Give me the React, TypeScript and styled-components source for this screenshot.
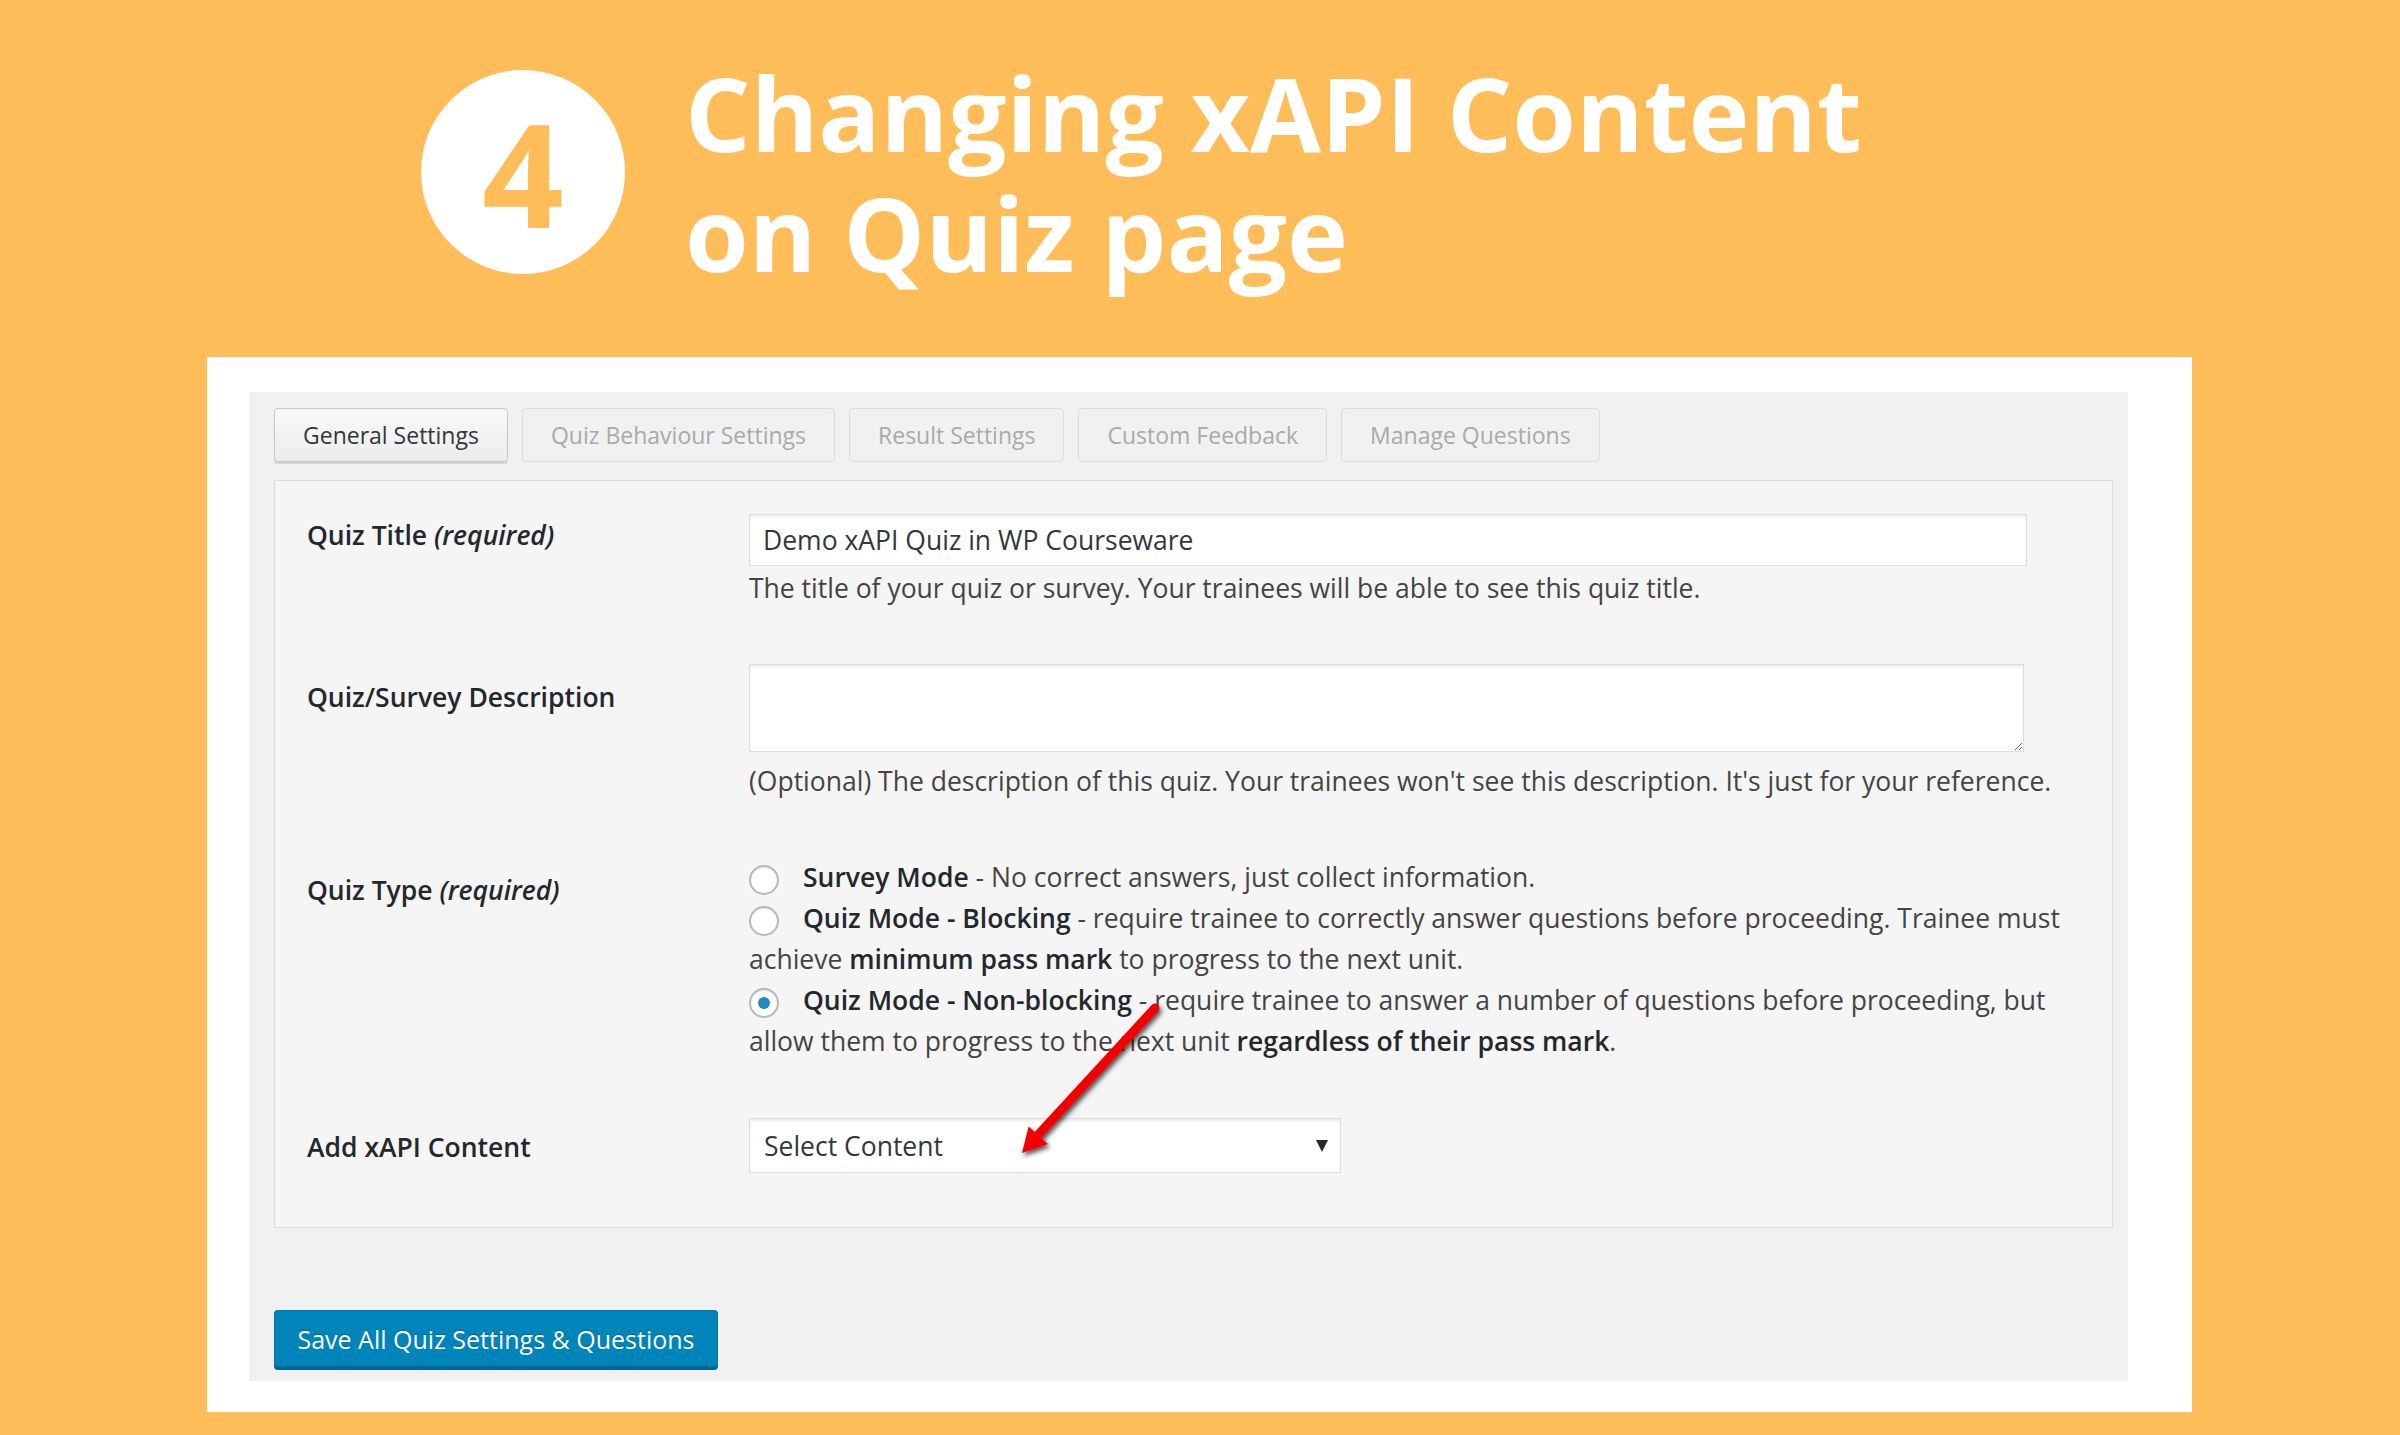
import React from 'react';
import styled, { createGlobalStyle } from 'styled-components';

const GlobalStyle = createGlobalStyle`
  html, body {
    margin: 0;
    padding: 0;
  }
  body {
    background: #ffbd59;
    font-family: "Open Sans", "Noto Sans", sans-serif;
  }
`;

const Page = styled.div`
  position: relative;
  width: 2400px;
  height: 1435px;
  overflow: hidden;
  background: #ffbd59;
`;

const Header = styled.header`
  display: flex;
  align-items: center;
  gap: 60px;
  padding: 52px 0 0 421px;
`;

const StepBadge = styled.div`
  width: 204px;
  height: 204px;
  border-radius: 50%;
  background: #ffffff;
  display: flex;
  align-items: center;
  justify-content: center;
  color: #ffbd59;
  font-size: 143px;
  font-weight: 700;
  line-height: 1;
`;

const Title = styled.h1`
  margin: 0;
  color: #ffffff;
  font-size: 103px;
  font-weight: 700;
  line-height: 120px;
`;

const Card = styled.div`
  box-sizing: border-box;
  width: 1985px;
  height: 1055px;
  margin: 65px 0 0 207px;
  padding: 35px 64px 31px 42px;
  background: #ffffff;
`;

const Panel = styled.div`
  box-sizing: border-box;
  height: 100%;
  padding: 16px 15px 14px 25px;
  background: #f1f1f1;
`;

const Tabs = styled.nav`
  display: flex;
  gap: 14px;
  height: 54px;
`;

const Tab = styled.div<{ $active?: boolean }>`
  box-sizing: border-box;
  display: flex;
  align-items: center;
  padding: 0 28px;
  border: 1.5px solid ${p => (p.$active ? '#c8c8c8' : '#dddddd')};
  border-radius: 4px;
  background: ${p => (p.$active ? 'linear-gradient(#f9f9f9, #ececec)' : '#f1f1f1')};
  box-shadow: ${p => (p.$active ? '0 2px 1px rgba(0,0,0,0.12)' : 'none')};
  color: ${p => (p.$active ? '#32373c' : '#a7aaad')};
  font-size: 23px;
  white-space: nowrap;
`;

const ContentBox = styled.section`
  box-sizing: border-box;
  height: 748px;
  margin-top: 18px;
  padding: 33px 34px 0 32px;
  border: 1.5px solid #dcdcdc;
  background: #f5f5f5;
  display: flex;
  flex-direction: column;
  gap: 56px;
`;

const FormRow = styled.div`
  display: grid;
  grid-template-columns: 442px 1fr;
`;

const Label = styled.div<{ $offset: number }>`
  padding-top: ${p => p.$offset}px;
  color: #23282d;
  font-size: 26.5px;
  font-weight: 600;
  line-height: 36px;

  em {
    font-weight: 600;
  }
`;

const Field = styled.div`
  display: flex;
  flex-direction: column;
  color: #444444;
  font-size: 26.5px;
`;

const TextInput = styled.div`
  box-sizing: border-box;
  width: 1278px;
  height: 52px;
  padding: 0 13px;
  display: flex;
  align-items: center;
  border: 1.5px solid #dddddd;
  box-shadow: inset 0 2px 3px rgba(0, 0, 0, 0.08);
  background: #ffffff;
  color: #32373c;
  font-size: 26.5px;
`;

const TextArea = styled.textarea`
  box-sizing: border-box;
  display: block;
  width: 1275px;
  height: 88px;
  margin: 0;
  padding: 8px 13px;
  border: 1.5px solid #dddddd;
  border-radius: 0;
  box-shadow: inset 0 2px 3px rgba(0, 0, 0, 0.08);
  background: #ffffff;
  font-family: inherit;
  font-size: 26.5px;
  outline: none;
`;

const Help = styled.p<{ $gap: number }>`
  margin: ${p => p.$gap}px 0 0;
  line-height: 40px;
`;

const Choices = styled.div`
  line-height: 41px;

  strong {
    color: #23282d;
    font-weight: 600;
  }
`;

const Radio = styled.span<{ $checked?: boolean }>`
  box-sizing: border-box;
  position: relative;
  display: inline-block;
  width: 30px;
  height: 30px;
  margin-right: 24px;
  vertical-align: middle;
  border: 2px solid #b4b9be;
  border-radius: 50%;
  background: #ffffff;
  box-shadow: inset 0 1px 2px rgba(0, 0, 0, 0.1);

  &::after {
    content: '';
    display: ${p => (p.$checked ? 'block' : 'none')};
    position: absolute;
    left: 50%;
    top: 50%;
    width: 12px;
    height: 12px;
    margin: -6px 0 0 -6px;
    border-radius: 50%;
    background: #1e8cbe;
  }
`;

const SelectBox = styled.div`
  box-sizing: border-box;
  width: 592px;
  height: 55px;
  padding: 0 12px 0 14px;
  display: flex;
  align-items: center;
  justify-content: space-between;
  border: 1.5px solid #dddddd;
  box-shadow: inset 0 2px 3px rgba(0, 0, 0, 0.08);
  background: #ffffff;
  color: #32373c;
  font-size: 26.5px;
`;

const Caret = styled.span`
  width: 0;
  height: 0;
  border-left: 6px solid transparent;
  border-right: 6px solid transparent;
  border-top: 12px solid #23282d;
`;

const SaveButton = styled.button`
  box-sizing: border-box;
  width: 444px;
  height: 57px;
  margin-top: 82px;
  padding: 0;
  border: 1.5px solid #0073aa;
  border-bottom-color: #006799;
  border-radius: 4px;
  background: #0085ba;
  box-shadow: 0 3px 0 #006799;
  color: #ffffff;
  font-family: inherit;
  font-size: 25px;
  text-shadow: 0 -1px 1px #006799;
`;

const Annotation = styled.svg`
  position: absolute;
  left: 1000px;
  top: 990px;
  overflow: visible;
`;

const tabs = [
  'General Settings',
  'Quiz Behaviour Settings',
  'Result Settings',
  'Custom Feedback',
  'Manage Questions',
];

const App: React.FC = () => {
  return (
    <Page>
      <GlobalStyle />
      <Header>
        <StepBadge>4</StepBadge>
        <Title>
          Changing xAPI Content
          <br />
          on Quiz page
        </Title>
      </Header>

      <Card>
        <Panel>
          <Tabs>
            {tabs.map((t, i) => (
              <Tab key={t} $active={i === 0}>
                {t}
              </Tab>
            ))}
          </Tabs>

          <ContentBox>
            <FormRow>
              <Label $offset={3}>
                Quiz Title <em>(required)</em>
              </Label>
              <Field>
                <TextInput>Demo xAPI Quiz in WP Courseware</TextInput>
                <Help $gap={2}>
                  The title of your quiz or survey. Your trainees will be able to see this quiz title.
                </Help>
              </Field>
            </FormRow>

            <FormRow>
              <Label $offset={15}>Quiz/Survey Description</Label>
              <Field>
                <TextArea defaultValue="" />
                <Help $gap={9}>
                  (Optional) The description of this quiz. Your trainees won't see this description. It's just for
                  your reference.
                </Help>
              </Field>
            </FormRow>

            <FormRow>
              <Label $offset={15}>
                Quiz Type <em>(required)</em>
              </Label>
              <Field>
                <Choices>
                  <Radio />
                  <strong>Survey Mode</strong> - No correct answers, just collect information.
                  <br />
                  <Radio />
                  <strong>Quiz Mode - Blocking</strong> - require trainee to correctly answer questions before
                  proceeding. Trainee must achieve <strong>minimum pass mark</strong> to progress to the next unit.
                  <br />
                  <Radio $checked />
                  <strong>Quiz Mode - Non-blocking</strong> - require trainee to answer a number of questions before
                  proceeding, but allow them to progress to the next unit <strong>regardless of their pass mark</strong>.
                </Choices>
              </Field>
            </FormRow>

            <FormRow>
              <Label $offset={11}>Add xAPI Content</Label>
              <Field>
                <SelectBox>
                  <span>Select Content</span>
                  <Caret />
                </SelectBox>
              </Field>
            </FormRow>
          </ContentBox>

          <SaveButton>Save All Quiz Settings &amp; Questions</SaveButton>
        </Panel>
      </Card>

      <Annotation width="200" height="180" viewBox="0 0 200 180">
        <defs>
          <filter id="arrowShadow" x="-20%" y="-20%" width="140%" height="140%">
            <feDropShadow dx="2" dy="3" stdDeviation="2.5" floodColor="#000" floodOpacity="0.7" />
          </filter>
        </defs>
        <g filter="url(#arrowShadow)">
          <line x1="155" y1="18" x2="38" y2="145" stroke="#f00000" strokeWidth="9" strokeLinecap="round" />
          <polygon points="22,163 48,154 28.6,136.5" fill="#f00000" />
        </g>
      </Annotation>
    </Page>
  );
};

export default App;
